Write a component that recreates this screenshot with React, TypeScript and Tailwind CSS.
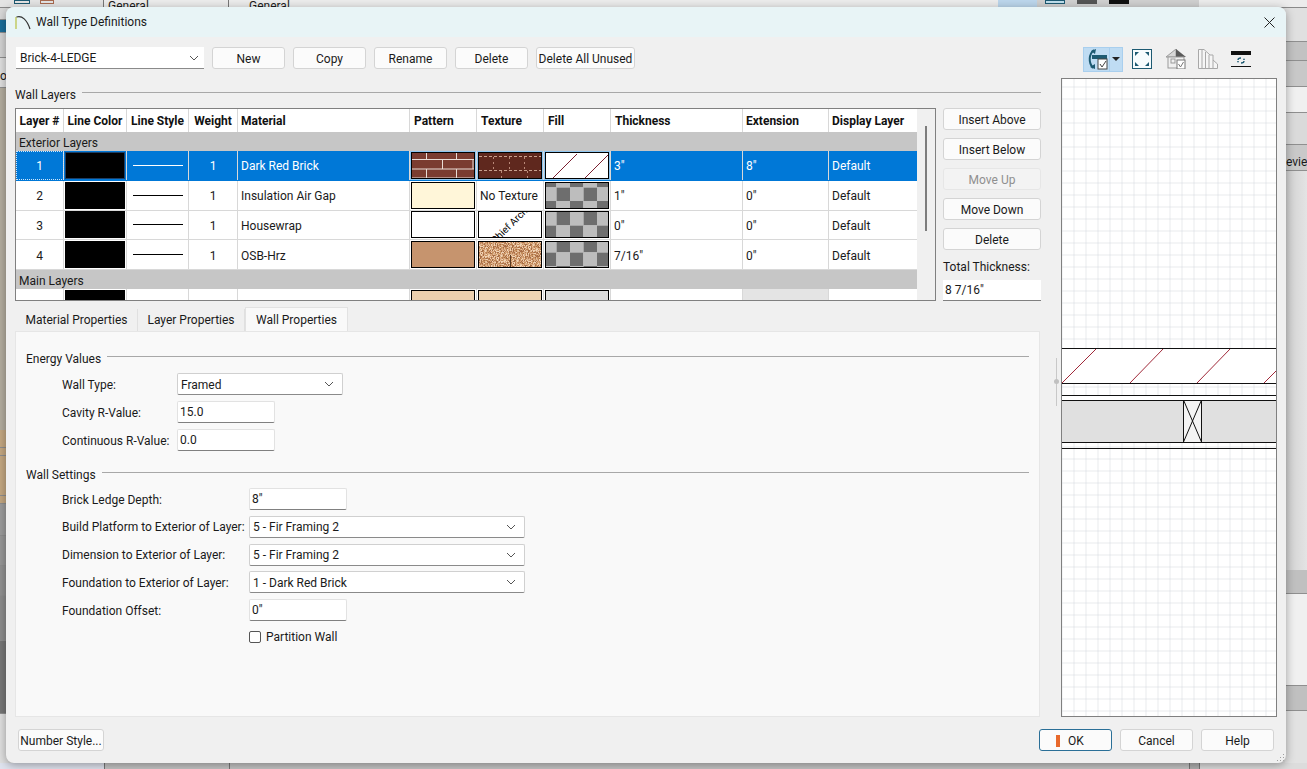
import React from "react";

const Chevron = () => (
  <svg width="10" height="6" viewBox="0 0 10 6" className="shrink-0">
    <path d="M1 1 L5 5 L9 1" fill="none" stroke="#555" strokeWidth="1" />
  </svg>
);

const Btn = ({ children, w = "w-[73px]", className = "" }: { children: React.ReactNode; w?: string; className?: string }) => (
  <button className={`${w} h-[22px] shrink-0 whitespace-nowrap rounded-[3px] border border-[#d4d4d4] bg-[#fbfbfb] pt-px text-[12px] leading-none text-[#1a1a1a] ${className}`}>
    {children}
  </button>
);

const Select = ({ value, w }: { value: string; w: string }) => (
  <div className={`${w} h-[22px] flex items-center justify-between pl-[3px] pr-[8px] bg-white border border-[#d0d0d0] border-b-[#8a8a8a] rounded-[2px] text-[12px]`}>
    <span className="pt-px">{value}</span>
    <Chevron />
  </div>
);

const Input = ({ value, w = "w-[98px]" }: { value: string; w?: string }) => (
  <div className={`${w} h-[22px] flex items-center pl-[2px] bg-white border border-[#e2e2e2] border-b-[#808080] rounded-[2px] text-[12px]`}>
    {value}
  </div>
);

const Group = ({ title }: { title: string }) => (
  <div className="flex items-center gap-[6px] h-[20px]">
    <span className="whitespace-nowrap translate-y-px">{title}</span>
    <div className="flex-1 h-px bg-[#a8a8a8] -translate-y-[2px]" />
  </div>
);

const Swatch = ({ children, bg = "bg-white", sel = false }: { children?: React.ReactNode; bg?: string; sel?: boolean }) => (
  <div className={`w-[64px] h-[27px] border border-black overflow-hidden ${bg} ${sel ? "outline outline-1 outline-[#8fc6f0]" : ""}`}>
    {children}
  </div>
);

const Brick = () => (
  <svg width="64" height="27" viewBox="0 0 64 27" className="block">
    <rect width="64" height="27" fill="#7a3c30" />
    <path d="M0 6.5H64M0 16H64M0 25H64" stroke="#e9ddd6" strokeWidth="1" />
    <path d="M14.5 0V6.5M44.5 0V6.5M30.5 6.5V16M61 6.5V16M14.5 16V25M44.5 16V25M30.5 25V27" stroke="#e9ddd6" strokeWidth="1" />
  </svg>
);

const BrickTex = () => (
  <svg width="64" height="27" viewBox="0 0 64 27" className="block">
    <rect width="64" height="27" fill="#5f281e" />
    <path d="M0 3.5H64M0 17.5H64" stroke="#c9a08e" strokeWidth="1" strokeDasharray="3 2" />
    <path d="M14.5 4V17M30.5 4V17M45.5 4V17M22.5 18V27M48.5 18V27" stroke="#b98878" strokeWidth="1" strokeDasharray="2 3" />
  </svg>
);

const Hatch = () => (
  <svg width="64" height="27" viewBox="0 0 64 27" className="block">
    <rect width="64" height="27" fill="#fff" />
    <path d="M5 27L31 1M37 27L63 1" stroke="#7a2030" strokeWidth="1" fill="none" />
  </svg>
);

const Checker = ({ k = 0, oy = 0 }: { k?: number; oy?: number }) => {
  const cells = [];
  for (let r = 0; r < 4; r++) {
    for (let c = 0; c < 6; c++) {
      const dark = (r + c + k) % 2 === 0;
      cells.push(<rect key={`${r}-${c}`} x={c * 13.5 - 3} y={r * 13.5 + oy} width="13.5" height="13.5" fill={dark ? "#6e6e6e" : "#bdbdbd"} />);
    }
  }
  return (
    <svg width="64" height="27" viewBox="0 0 64 27" className="block">
      {cells}
    </svg>
  );
};

const Speckle = () => {
  const dots = [];
  const cols = ["#d9a67e", "#b97f55", "#e6c09c", "#c8925f", "#a56c45", "#dcb08a", "#f0d4b6"];
  let seed = 17;
  for (let y = 0; y < 27; y++) {
    for (let x = 0; x < 64; x++) {
      seed = (seed * 73 + 41) % 1009;
      dots.push(<rect key={`${x}-${y}`} x={x} y={y} width="1" height="1" fill={cols[seed % cols.length]} />);
    }
  }
  return (
    <svg width="64" height="27" viewBox="0 0 64 27" className="block">
      {dots}
      <path d="M31.5 13V26" stroke="#5a3a20" strokeWidth="1" />
    </svg>
  );
};

const Stamp = () => (
  <div className="w-full h-full relative overflow-hidden">
    <span className="absolute left-[7px] top-[8px] text-[10px] leading-none whitespace-nowrap text-black -rotate-45 origin-center">Chief Archi</span>
  </div>
);

const cols = "grid grid-cols-[48px_63px_62px_49px_172px_67px_67px_67px_132px_86px_88px]";
const cell = "border-r border-[#d8d8d8] flex items-center justify-center";
const cellL = "border-r border-[#d8d8d8] flex items-center pl-[3px]";
const cellH = "border-r border-[#d8d8d8] flex items-center pl-[4px]";

const LineSample = ({ color }: { color: string }) => <div className={`w-[50px] h-px ${color}`} />;

type RowData = { n: string; mat: string; pat: React.ReactNode; tex: React.ReactNode; fill: React.ReactNode; th: string; ext: string; sel?: boolean };

const Row = ({ n, mat, pat, tex, fill, th, ext, sel }: RowData) => (
  <div className={`${cols} h-[30px] border-b ${sel ? "bg-[#0078d7] text-white border-[#0078d7]" : "bg-white border-[#d8d8d8]"}`}>
    <div className={`${cell} pt-[2px] ${sel ? "outline outline-1 -outline-offset-1 outline-dotted outline-[#cfe6fa]" : ""}`}>{n}</div>
    <div className={cell}>
      <div className={`w-[60px] h-[27px] bg-black ${sel ? "border border-[#1b3f68]" : ""}`} />
    </div>
    <div className={cell}>
      <LineSample color={sel ? "bg-white" : "bg-black"} />
    </div>
    <div className={`${cell} pt-[2px]`}>1</div>
    <div className={`${cellL} pt-[2px]`}>{mat}</div>
    <div className={cell}>{pat}</div>
    <div className={cell}>{tex}</div>
    <div className={cell}>{fill}</div>
    <div className={`${cellL} pt-[2px]`}>{th}</div>
    <div className={`${cellL} pt-[2px]`}>{ext}</div>
    <div className="flex items-center pl-[3px] pt-[2px]">Default</div>
  </div>
);

const GroupRow = ({ label }: { label: string }) => (
  <div className="h-[19px] bg-[#c6c6c6] flex items-center pl-[3px] pt-[2px] text-[#1a1a1a]">{label}</div>
);

const PropRow = ({ label, w, children }: { label: string; w: string; children: React.ReactNode }) => (
  <div className="flex items-center h-[22px]">
    <span className={`${w} shrink-0 whitespace-nowrap pt-px`}>{label}</span>
    {children}
  </div>
);

const ToolIcons = () => (
  <div className="flex items-center h-[25px]">
    <div className="flex h-[25px] bg-[#bfdcf3] border border-[#a9cfee]">
      <div className="w-[26px] flex items-center justify-center border-r border-[#a9cfee]">
        <svg width="22" height="22" viewBox="0 0 22 22">
          <path d="M8 2C3 6 2 14 7 20" fill="none" stroke="#1d5a72" strokeWidth="2" />
          <path d="M5 3L10 1L9 6Z M4 19L9 21L9 16Z" fill="#1d5a72" />
          <rect x="6" y="7" width="15" height="4" fill="#1d5a72" />
          <rect x="12" y="11" width="9" height="10" fill="#fff" stroke="#444" />
          <path d="M14 16L16 19L20 13" fill="none" stroke="#444" />
        </svg>
      </div>
      <div className="w-[12px] flex items-center justify-center">
        <svg width="8" height="4" viewBox="0 0 8 4"><path d="M0 0H8L4 4Z" fill="#222" /></svg>
      </div>
    </div>
    <svg width="20" height="20" viewBox="0 0 20 20" className="ml-[9px]">
      <rect x="0.5" y="0.5" width="19" height="19" fill="#f6fbfd" stroke="#1d5a72" />
      <path d="M3 3L7 3L3 7Z M17 3L13 3L17 7Z M3 17L7 17L3 13Z M17 17L13 17L17 13Z" fill="#1d5a72" />
    </svg>
    <svg width="20" height="20" viewBox="0 0 20 20" className="ml-[14px]">
      <path d="M0 8L10 0V8Z" fill="#d8d8d8" stroke="#9a9a9a" />
      <path d="M10 0L20 8H10Z" fill="#5a5a5a" />
      <rect x="2" y="8" width="16" height="11" fill="#f0f0f0" stroke="#9a9a9a" />
      <rect x="5" y="10" width="4" height="4" fill="none" stroke="#9a9a9a" />
      <rect x="11" y="11" width="8" height="9" fill="#fff" stroke="#777" />
      <path d="M12.5 15L14.5 18L17.5 13" fill="none" stroke="#777" />
    </svg>
    <svg width="20" height="20" viewBox="0 0 20 20" className="ml-[12px]">
      <path d="M0.5 19.5V0.5H6L12 6H15V11L19.5 15V19.5Z M4 0.5V19.5 M7.5 3V19.5 M11 6V19.5 M15 11V19.5" fill="#f6f6f6" stroke="#a8a8a8" />
    </svg>
    <svg width="20" height="16" viewBox="0 0 20 16" className="ml-[13px]">
      <rect width="20" height="4" fill="#111" />
      <path d="M7 9C7 7 9 7 10 7M13 10C13 12 11 12 10 12" fill="none" stroke="#1d5a72" strokeWidth="1.3" />
      <path d="M6 10L8 10L7 12Z M12 9L14 9L13 7Z" fill="#1d5a72" />
      <rect y="15" width="20" height="1" fill="#111" />
    </svg>
  </div>
);

const Preview = () => (
  <svg width="214" height="639" viewBox="0 0 214 639" className="block">
    <defs>
      <pattern id="g" x="11.5" y="7.5" width="12" height="12" patternUnits="userSpaceOnUse">
        <path d="M0 0V12M0 0H12" stroke="#d2d5db" strokeWidth="1" fill="none" />
      </pattern>
    </defs>
    <rect width="214" height="639" fill="#fff" />
    <rect width="214" height="639" fill="url(#g)" />
    <rect x="0" y="269" width="214" height="35" fill="#fff" />
    <path d="M0 304L35 269M68 304L102 269M135 304L169 269M202 304L214 292" stroke="#a02838" strokeWidth="1" fill="none" />
    <rect x="0" y="316" width="214" height="5" fill="#fff" />
    <rect x="0" y="321" width="214" height="42" fill="#e0e0e0" />
    <rect x="121" y="321" width="19" height="42" fill="#f4f4f4" />
    <path d="M121.5 321V363M139.5 321V363M121.5 321L139.5 363M139.5 321L121.5 363" stroke="#111" strokeWidth="1" fill="none" />
    <path d="M0 269.5H214M0 304.5H214M0 316.5H214M0 321.5H214M0 363.5H214M0 369.5H214" stroke="#111" strokeWidth="1" />
  </svg>
);

const Band = ({ h, bg, children }: { h: string; bg: string; children?: React.ReactNode }) => (
  <div className={`${h} ${bg} border-b border-[#8f8f8f] shrink-0 overflow-hidden`}>{children}</div>
);

export default function App() {
  return (
    <div className="relative w-[1307px] h-[769px] overflow-hidden bg-[#dcdcdc] text-[12px] text-[#1a1a1a] font-['Roboto','Noto_Sans',sans-serif]">
      {/* application behind the dialog */}
      <div className="h-full flex flex-col">
        <div className="h-[8px] flex shrink-0 text-[12px] leading-none bg-[#ececec] border-b border-[#8a8a8a]">
          <div className="w-[104px] bg-[#e4e4e4] border-r border-[#777] flex gap-[10px] pl-[14px]">
            <div className="w-[16px] h-[4px] border border-[#1d5a72]" />
            <div className="w-[14px] h-[4px] border border-[#a86a50]" />
          </div>
          <div className="w-[125px] pl-[4px] border-r border-[#777] overflow-hidden">General</div>
          <div className="w-[769px] pl-[20px] overflow-hidden">General</div>
          <div className="w-[39px] bg-[#bcd6ec]" />
          <div className="w-[162px] bg-[#d0d0d0] flex gap-[12px] pl-[8px]">
            <div className="w-[20px] h-[4px] bg-[#bfe0ee] border border-[#1d5a72]" />
            <div className="w-[20px] h-[4px] bg-[#555]" />
            <div className="w-[20px] h-[4px] bg-[#111]" />
          </div>
        </div>
        <div className="flex-1 flex justify-between">
          <div className="w-[8px] flex flex-col">
            <Band h="h-[12px]" bg="bg-[#d8d8d8]" />
            <Band h="h-[13px]" bg="bg-[#1a6e9a]" />
            <Band h="h-[25px]" bg="bg-[#d4d4d4]" />
            <Band h="h-[30px]" bg="bg-[#e0e0e0]">
              <div className="pt-[12px] leading-none whitespace-nowrap">os</div>
            </Band>
            <div className="h-[342px] shrink-0 bg-[#b4ad9f]" />
            <Band h="h-[18px]" bg="bg-[#c4a882]" />
            <Band h="h-[8px]" bg="bg-[#c4a882]" />
            <Band h="h-[40px]" bg="bg-[#c4a882]" />
            <Band h="h-[8px]" bg="bg-[#c4a882]" />
            <Band h="h-[32px]" bg="bg-[#9c9c9c]" />
            <Band h="h-[30px]" bg="bg-[#979797]" />
            <Band h="h-[30px]" bg="bg-[#919191]" />
            <Band h="h-[45px]" bg="bg-[#8c8c8c]" />
            <Band h="h-[73px]" bg="bg-[#777777]" />
            <div className="flex-1 bg-[#e0e0e0]" />
          </div>
          <div className="w-[22px] flex flex-col">
            <Band h="h-[34px]" bg="bg-[#e0e0e0]" />
            <Band h="h-[19px]" bg="bg-[#c2c2c2]" />
            <Band h="h-[26px]" bg="bg-[#c8c8c8]" />
            <Band h="h-[26px]" bg="bg-[#f0f0f0]" />
            <Band h="h-[32px]" bg="bg-[#dadada]" />
            <Band h="h-[26px]" bg="bg-[#c9c9c9]">
              <div className="pl-[1px] pt-[11px] leading-none whitespace-nowrap">eview</div>
            </Band>
            <div className="h-[399px] shrink-0 bg-[linear-gradient(90deg,#cfcfcf,#e4e4e4)]" />
            <Band h="h-[24px]" bg="bg-[#c0c0c0]" />
            <Band h="h-[92px]" bg="bg-[#f0f0f0]" />
            <Band h="h-[25px]" bg="bg-[#c0c0c0]" />
            <div className="flex-1 bg-[#e2e2e2]" />
          </div>
        </div>
        <div className="h-[6px] shrink-0 flex bg-[#c4c4c4]">
          <div className="w-[105px] bg-[#dfe3ee] border-r border-[#777]" />
          <div className="w-[125px] bg-[#c4c4c4] border-r border-[#777]" />
          <div className="w-[960px] border-r border-[#777]" />
          <div className="w-[10px] bg-[#b0b0b0] border-r border-[#777]" />
          <div className="flex-1 bg-[#dcdcdc]" />
        </div>
      </div>

      {/* the dialog window */}
      <div className="absolute left-[6px] top-[7px] w-[1280px] h-[756px] flex flex-col rounded-[8px] overflow-hidden bg-[#f0f0f0] shadow-[0_2px_10px_rgba(0,0,0,0.35)]">
        <div className="h-[30px] shrink-0 flex items-center justify-between bg-[#e8f4f6] pl-[9px] pr-[11px]">
          <div className="flex items-center gap-[5px]">
            <svg width="16" height="16" viewBox="0 0 16 16">
              <path d="M1 15V3" stroke="#b8c040" strokeWidth="1.2" fill="none" />
              <path d="M1.5 3C7 1 12 6 15 15" stroke="#333" strokeWidth="1.2" fill="none" />
            </svg>
            <span className="text-[12px]">Wall Type Definitions</span>
          </div>
          <svg width="11" height="11" viewBox="0 0 11 11">
            <path d="M0.5 0.5L10.5 10.5M10.5 0.5L0.5 10.5" stroke="#222" strokeWidth="1" />
          </svg>
        </div>

        <div className="flex-1 flex pl-[9px] pr-[9px] min-h-0">
          {/* left column */}
          <div className="w-[1026px] shrink-0 flex flex-col">
            <div className="flex items-center gap-[8px] pt-[10px] pl-px">
              <div className="w-[188px] h-[22px] flex items-center justify-between pl-[4px] pr-[5px] bg-white border-b border-[#8a8a8a]">
                <span>Brick-4-LEDGE</span>
                <Chevron />
              </div>
              <Btn>New</Btn>
              <Btn>Copy</Btn>
              <Btn>Rename</Btn>
              <Btn>Delete</Btn>
              <Btn w="w-[99px]">Delete All Unused</Btn>
            </div>
            <div className="mt-[15px]">
              <Group title="Wall Layers" />
            </div>
            <div className="flex gap-[7px] mt-[4px]">
              <div className="w-[921px] h-[193px] border border-[#808080] flex bg-white overflow-hidden shrink-0">
                <div className="w-[901px] shrink-0 flex flex-col overflow-hidden">
                  <div className={`${cols} h-[23px] shrink-0 font-bold text-[12px] text-[#111]`}>
                    <div className={cell}>Layer #</div>
                    <div className={cell}>Line Color</div>
                    <div className={cell}>Line Style</div>
                    <div className={cell}>Weight</div>
                    <div className={cellL}>Material</div>
                    <div className={cellH}>Pattern</div>
                    <div className={cellH}>Texture</div>
                    <div className={cellH}>Fill</div>
                    <div className={cellH}>Thickness</div>
                    <div className={cellL}>Extension</div>
                    <div className="flex items-center pl-[3px]">Display Layer</div>
                  </div>
                  <GroupRow label="Exterior Layers" />
                  <Row sel n="1" mat="Dark Red Brick" pat={<Swatch sel><Brick /></Swatch>} tex={<Swatch sel><BrickTex /></Swatch>} fill={<Swatch sel><Hatch /></Swatch>} th={'3"'} ext={'8"'} />
                  <Row n="2" mat="Insulation Air Gap" pat={<Swatch bg="bg-[#fff6d9]" />} tex={<span className="w-full pl-[3px] pt-[2px]">No Texture</span>} fill={<Swatch><Checker oy={-9} /></Swatch>} th={'1"'} ext={'0"'} />
                  <Row n="3" mat="Housewrap" pat={<Swatch />} tex={<Swatch><Stamp /></Swatch>} fill={<Swatch><Checker k={1} /></Swatch>} th={'0"'} ext={'0"'} />
                  <Row n="4" mat="OSB-Hrz" pat={<Swatch bg="bg-[#c6946e]" />} tex={<Swatch><Speckle /></Swatch>} fill={<Swatch><Checker k={1} oy={-3} /></Swatch>} th={'7/16"'} ext={'0"'} />
                  <GroupRow label="Main Layers" />
                  <div className={`${cols} h-[11px] shrink-0`}>
                    <div className={cell} />
                    <div className={`${cell} pt-px`}><div className="w-[60px] h-full bg-black" /></div>
                    <div className={cell} />
                    <div className={cell} />
                    <div className={cell} />
                    <div className={`${cell} pt-px`}><div className="w-[64px] h-full bg-[#eccfae] border border-b-0 border-black" /></div>
                    <div className={`${cell} pt-px`}><div className="w-[64px] h-full bg-[#efd4b4] border border-b-0 border-black" /></div>
                    <div className={`${cell} pt-px`}><div className="w-[64px] h-full bg-[#dcdcdc] border border-b-0 border-black" /></div>
                    <div className={cell} />
                    <div className={cell}><div className="w-full h-full bg-[#e4e4e4]" /></div>
                    <div />
                  </div>
                </div>
                <div className="flex-1 bg-[#f0f0f0] flex justify-center pt-[17px]">
                  <div className="w-[2px] h-[105px] bg-[#7d7d7d]" />
                </div>
              </div>
              <div className="w-[98px] flex flex-col gap-[8px] shrink-0">
                <Btn w="w-[98px]">Insert Above</Btn>
                <Btn w="w-[98px]">Insert Below</Btn>
                <Btn w="w-[98px]" className="!text-[#8f8f8f] !bg-[#f3f3f3] !border-[#e6e6e6]">Move Up</Btn>
                <Btn w="w-[98px]">Move Down</Btn>
                <Btn w="w-[98px]">Delete</Btn>
                <div className="flex flex-col gap-[5px] mt-[1px]">
                  <span className="leading-[16px]">Total Thickness:</span>
                  <div className="h-[21px] bg-white flex items-center pl-[2px] border-b border-[#808080]">8 7/16"</div>
                </div>
              </div>
            </div>

            {/* tabs */}
            <div className="flex items-end h-[24px] mt-[6px] pl-px">
              <div className="w-[122px] h-[22px] flex items-center justify-center bg-[#f0f0f0] border-r border-[#e0e0e0]">Material Properties</div>
              <div className="w-[107px] h-[22px] flex items-center justify-center bg-[#f0f0f0] border-r border-[#e0e0e0]">Layer Properties</div>
              <div className="w-[103px] h-[24px] flex items-center justify-center bg-[#f9f9f9] border border-b-0 border-[#e2e2e2]">Wall Properties</div>
            </div>
            <div className="w-[1025px] h-[386px] bg-[#f9f9f9] border border-[#e6e6e6] pl-[10px] pr-[10px] pt-[16px] flex flex-col">
              <Group title="Energy Values" />
              <div className="pl-[36px] pt-[5px] flex flex-col gap-[6px]">
                <PropRow label="Wall Type:" w="w-[115px]"><Select value="Framed" w="w-[166px]" /></PropRow>
                <PropRow label="Cavity R-Value:" w="w-[115px]"><Input value="15.0" /></PropRow>
                <PropRow label="Continuous R-Value:" w="w-[115px]"><Input value="0.0" /></PropRow>
              </div>
              <div className="mt-[13px]"><Group title="Wall Settings" /></div>
              <div className="pl-[36px] pt-[4px] flex flex-col gap-[5.75px]">
                <PropRow label="Brick Ledge Depth:" w="w-[187px]"><Input value={'8"'} /></PropRow>
                <PropRow label="Build Platform to Exterior of Layer:" w="w-[187px]"><Select value="5 - Fir Framing 2" w="w-[276px]" /></PropRow>
                <PropRow label="Dimension to Exterior of Layer:" w="w-[187px]"><Select value="5 - Fir Framing 2" w="w-[276px]" /></PropRow>
                <PropRow label="Foundation to Exterior of Layer:" w="w-[187px]"><Select value="1 - Dark Red Brick" w="w-[276px]" /></PropRow>
                <PropRow label="Foundation Offset:" w="w-[187px]"><Input value={'0"'} /></PropRow>
              </div>
              <div className="flex items-center gap-[5px] pl-[223px] mt-[8px] h-[16px]">
                <div className="w-[12px] h-[12px] border border-[#555] rounded-[2px] bg-white" />
                <span>Partition Wall</span>
              </div>
            </div>
          </div>

          {/* splitter */}
          <div className="w-[20px] shrink-0 flex items-center justify-start pl-[15px]">
            <div className="relative w-px h-[48px] bg-[#c8c8c8] mt-[10px]">
              <div className="absolute left-[-2px] top-[21px] w-[5px] h-[5px] rounded-full bg-[#c0c0c0]" />
            </div>
          </div>

          {/* right column */}
          <div className="w-[216px] shrink-0 flex flex-col">
            <div className="h-[41px] flex items-end pl-[22px] pb-[6px]">
              <ToolIcons />
            </div>
            <div className="h-[641px] border border-[#808080] overflow-hidden">
              <Preview />
            </div>
          </div>
        </div>

        <div className="h-[46px] shrink-0 relative flex items-start justify-between pt-[12px] pl-[12px] pr-[12px]">
          <Btn w="w-[86px]">Number Style...</Btn>
          <div className="flex gap-[8px]">
            <Btn className="!border-[#2a6f97] flex items-center justify-start pl-[16px] gap-[8px]">
              <span className="w-[4px] h-[12px] bg-[#e8692c]" />
              OK
            </Btn>
            <Btn>Cancel</Btn>
            <Btn>Help</Btn>
          </div>
          <svg width="9" height="9" viewBox="0 0 9 9" className="absolute right-[1px] bottom-[1px]">
            <path d="M7 1h1v1H7zM4 4h1v1H4zM7 4h1v1H7zM1 7h1v1H1zM4 7h1v1H4zM7 7h1v1H7z" fill="#a0a0a0" />
          </svg>
        </div>
      </div>
    </div>
  );
}
